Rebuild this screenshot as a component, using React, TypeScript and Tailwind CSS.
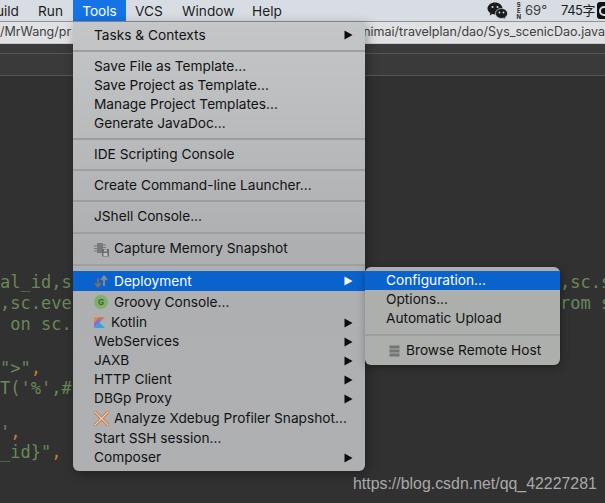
import type { ReactNode } from 'react';

const SANS = 'font-["Inter","Liberation_Sans",sans-serif]';

function Arrow({ white }: { white?: boolean }) {
  return (
    <svg width="9" height="10" viewBox="0 0 9 10" className="absolute left-[271px] top-1/2 -translate-y-1/2">
      <path d="M0.5 0.5 L8.5 5 L0.5 9.5 Z" fill={white ? '#fff' : '#0b0b0b'} />
    </svg>
  );
}

function Item({
  label,
  h = 19,
  icon,
  arrow,
  active,
  indent = 21,
}: {
  label: string;
  h?: number;
  icon?: ReactNode;
  arrow?: boolean;
  active?: boolean;
  indent?: number;
}) {
  return (
    <div
      className={`relative flex items-center whitespace-nowrap ${active ? 'bg-[#0a62cd] text-white' : 'text-[#121314]'}`}
      style={{ height: h, paddingLeft: indent }}
    >
      {icon}
      <span>{label}</span>
      {arrow && <Arrow white={active} />}
    </div>
  );
}

function Sep({ h = 11 }: { h?: number }) {
  return (
    <div className="flex flex-col justify-center" style={{ height: h }}>
      <div className="h-[2px] bg-[#9c9e9f]" />
    </div>
  );
}

function IconSlot({ children }: { children: ReactNode }) {
  return <div className="w-[20px] h-[18px] flex items-center shrink-0">{children}</div>;
}

function MemoryIcon() {
  return (
    <svg width="16" height="16" viewBox="0 0 16 16">
      <path d="M0 5h3M0 7.5h3M0 10h3" stroke="#77797a" strokeWidth="1" />
      <rect x="3" y="2" width="6" height="10" fill="#77797a" />
      <path d="M9 4h3M9 6.500h3" stroke="#77797a" strokeWidth="1" />
      <path d="M8 8h7v7.500H8z" fill="#6b6d6e" />
      <rect x="10" y="8.500" width="3" height="2" fill="#b6b8b9" />
      <rect x="9.500" y="12" width="4" height="3" fill="#c0c2c3" />
    </svg>
  );
}

function DeployIcon() {
  return (
    <svg width="14" height="13" viewBox="0 0 14 13">
      <path d="M4 3v8M1 8l3 3.500L7 8" fill="none" stroke="#7a6f60" strokeWidth="1.800" />
      <path d="M10 11V2M7 5l3-3.500L13 5" fill="none" stroke="#8d8e8c" strokeWidth="1.800" />
    </svg>
  );
}

function GroovyIcon() {
  return (
    <div className="w-[14px] h-[14px] rounded-full bg-[#7fb069] flex items-center justify-center text-[8px] font-bold text-[#3f5f35] leading-none">
      G
    </div>
  );
}

function KotlinIcon() {
  return (
    <svg width="11" height="11" viewBox="0 0 11 11">
      <defs>
        <linearGradient id="kt" x1="0" y1="1" x2="1" y2="0">
          <stop offset="0" stopColor="#c757bc" />
          <stop offset="0.5" stopColor="#7f6cd8" />
          <stop offset="1" stopColor="#f08a24" />
        </linearGradient>
      </defs>
      <path d="M0 0h5.500L0 5.800z" fill="#f08a24" />
      <path d="M5.500 0H11L0 11V5.800z" fill="url(#kt)" />
      <path d="M0 11l5.500-5.500L11 11z" fill="#29a8e8" />
    </svg>
  );
}

function XdebugIcon() {
  return (
    <svg width="15" height="15" viewBox="0 0 15 15">
      <path d="M1 1l13 13M14 1L1 14" stroke="#c9703a" strokeWidth="3" strokeLinecap="round" />
      <path d="M1 1l13 13M14 1L1 14" stroke="#e9d2bd" strokeWidth="1.200" strokeLinecap="round" />
    </svg>
  );
}

function ServerIcon() {
  return (
    <svg width="11" height="12" viewBox="0 0 11 12">
      <rect x="0.500" y="0.500" width="10" height="3" fill="#737576" />
      <rect x="0.500" y="4.500" width="10" height="3" fill="#737576" />
      <rect x="0.500" y="8.500" width="10" height="3" fill="#737576" />
    </svg>
  );
}

function WeChatIcon() {
  return (
    <svg width="21" height="18" viewBox="0 0 21 18">
      <path d="M8 0.500C3.800 0.500 0.500 3.200 0.500 6.500c0 1.900 1.100 3.500 2.800 4.600L2.600 13.500l2.700-1.400c.9.300 1.800.4 2.700.4 4.200 0 7.500-2.700 7.500-6S12.200.500 8 .500z" fill="#1b1c1d" />
      <path d="M14.500 6.500c-3.400 0-6 2.200-6 5s2.600 5 6 5c.7 0 1.400-.1 2-.3l2.200 1.200-.6-2c1.500-.9 2.400-2.300 2.400-3.900 0-2.800-2.600-5-6-5z" fill="#1b1c1d" stroke="#d8dde3" strokeWidth="0.800" />
      <circle cx="5.500" cy="5" r="1" fill="#d8dde3" />
      <circle cx="10.500" cy="5" r="1" fill="#d8dde3" />
      <circle cx="12.500" cy="10.500" r="0.900" fill="#d8dde3" />
      <circle cx="16.500" cy="10.500" r="0.900" fill="#d8dde3" />
    </svg>
  );
}

function CodeLine({ left, right, h = 20 }: { left?: ReactNode; right?: string; h?: number }) {
  return (
    <div className="flex items-center whitespace-pre" style={{ height: h }}>
      <span className="w-[560px] shrink-0">{left}</span>
      {right && <span>{right}</span>}
    </div>
  );
}

export default function App() {
  return (
    <div className={`relative w-[605px] h-[503px] overflow-hidden bg-[#313131] ${SANS}`}>
      {/* macOS menu bar */}
      <div className="h-[21px] flex items-center bg-[#d8dde3] text-[13.7px] text-[#1d1e1f] border-b border-[#8d9094] box-content">
        <span className="w-[38px] pt-[2px] overflow-hidden whitespace-nowrap flex justify-end pr-[19px] shrink-0">uild</span>
        <span className="w-[35px] pt-[2px] shrink-0">Run</span>
        <span className="w-[53px] h-full pt-[2px] flex items-center justify-center bg-[#1473e6] text-white shrink-0">Tools</span>
        <span className="ml-[9px] w-[47px] pt-[2px] shrink-0">VCS</span>
        <span className="w-[70px] pt-[2px] shrink-0">Window</span>
        <span className="w-[40px] pt-[2px] shrink-0">Help</span>
        <div className="ml-auto flex items-center shrink-0">
          <WeChatIcon />
          <div className="ml-[8px] flex flex-col items-center text-[6px] leading-[6px] font-bold text-[#2a2a2a]">
            <span>S</span>
            <span>E</span>
            <span>N</span>
          </div>
          <span className="ml-[4px] text-[13px] text-[#3c3d3e]">69°</span>
          <span className="ml-[14px] text-[13px] tracking-[-0.5px]" style={{ fontFamily: 'Inter, "Noto Sans CJK SC", sans-serif' }}>
            745字
          </span>
          <div className="ml-[2px] w-[8px] h-[17px] rounded-l-[3px] bg-[#111] flex items-center overflow-hidden">
            <div className="ml-[2px] w-[10px] h-[10px] shrink-0 rounded-full border-2 border-[#d8dde3]" />
          </div>
        </div>
      </div>

      {/* path bar */}
      <div className="h-[22px] flex items-center justify-between bg-[#e0e1e2] text-[12.5px] text-[#414243] whitespace-nowrap border-b border-[#c9c9c9]">
        <span>/MrWang/pr</span>
        <span>nimai/travelplan/dao/Sys_scenicDao.java</span>
      </div>

      {/* tab strip */}
      <div className="h-[9px] bg-[#3a3a3a] border-b border-[#565656] box-content" />
      <div className="h-[21px] bg-[#3a3a3a] border-b border-[#565656] box-content" />

      {/* editor */}
      <div className="pt-[196px] font-['DejaVu_Sans_Mono',monospace] text-[17px] text-[#6a8759]">
        <CodeLine left="al_id,s" right=",sc.s" h={21} />
        <CodeLine left=",sc.eve" right="rom s" h={21} />
        <CodeLine left=" on sc." h={21} />
        <CodeLine h={24} />
        <CodeLine left={<>"&gt;"<span className="text-[#cc7832]">,</span></>} h={20} />
        <CodeLine left="T('%',#" h={20} />
        <CodeLine h={24} />
        <CodeLine left={<>'<span className="text-[#cc7832]">,</span></>} h={20} />
        <CodeLine left={<>_id&#125;"<span className="text-[#cc7832]">,</span></>} h={20} />
      </div>

      {/* Tools menu */}
      <div className="absolute left-[73px] top-[22px] w-[292px] h-[449px] rounded-b-[6px] bg-gradient-to-b from-[#c4c6c7] via-[#adafb0] to-[#aeb0b1] text-[13.7px] shadow-[2px_3px_12px_rgba(0,0,0,0.35)] pt-[4px]">
        <Item label="Tasks & Contexts" arrow h={18} />
        <Sep h={13} />
        <Item label="Save File as Template..." />
        <Item label="Save Project as Template..." />
        <Item label="Manage Project Templates..." />
        <Item label="Generate JavaDoc..." />
        <Sep h={12} />
        <Item label="IDE Scripting Console" />
        <Sep h={12} />
        <Item label="Create Command-line Launcher..." />
        <Sep h={12} />
        <Item label="JShell Console..." />
        <Sep h={13} />
        <Item label="Capture Memory Snapshot" icon={<IconSlot><MemoryIcon /></IconSlot>} />
        <Sep h={13} />
        <Item label="Deployment" arrow active h={20} icon={<IconSlot><DeployIcon /></IconSlot>} />
        <Item label="Groovy Console..." h={22} icon={<IconSlot><GroovyIcon /></IconSlot>} />
        <Item label="Kotlin" arrow h={19} icon={<div className="w-[17px] shrink-0 flex"><KotlinIcon /></div>} />
        <Item label="WebServices" arrow />
        <Item label="JAXB" arrow />
        <Item label="HTTP Client" arrow />
        <Item label="DBGp Proxy" arrow />
        <Item label="Analyze Xdebug Profiler Snapshot..." h={20} icon={<IconSlot><XdebugIcon /></IconSlot>} />
        <Item label="Start SSH session..." h={20} />
        <Item label="Composer" arrow />
      </div>

      {/* Deployment submenu */}
      <div className="absolute left-[365px] top-[267px] w-[195px] h-[98px] rounded-[6px] bg-[#adafac] text-[13.7px] shadow-[1px_2px_10px_rgba(0,0,0,0.35)] overflow-hidden pt-[4px]">
        <div className="h-[19px] flex items-center pl-[21px] bg-[#0a62cd] text-white">Configuration...</div>
        <div className="h-[19px] flex items-center pl-[21px] text-[#121314]">Options...</div>
        <div className="h-[19px] flex items-center pl-[21px] text-[#121314]">Automatic Upload</div>
        <Sep h={13} />
        <div className="h-[19px] flex items-center pl-[24px] text-[#121314]">
          <div className="w-[17px] shrink-0 flex"><ServerIcon /></div>
          <span>Browse Remote Host</span>
        </div>
      </div>

      {/* watermark */}
      <div className="absolute left-[353px] top-[473px] font-['Liberation_Sans',sans-serif] text-[15.9px] leading-[22px] text-[#a9a9a9] whitespace-nowrap">
        https://blog.csdn.net/qq_42227281
      </div>
    </div>
  );
}
